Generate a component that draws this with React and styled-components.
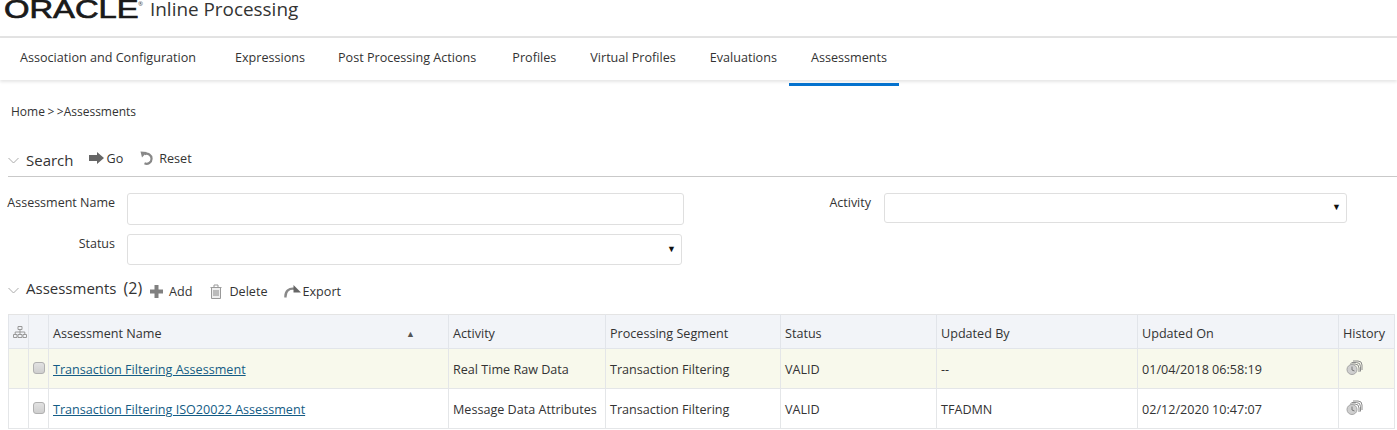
import React from "react";
import styled, { createGlobalStyle } from "styled-components";

const GlobalStyle = createGlobalStyle`
  html, body {
    margin: 0;
    padding: 0;
    background: #fff;
    font-family: "Open Sans", "Noto Sans", sans-serif;
    color: #333;
    overflow: hidden;
  }
`;

const Page = styled.div`
  width: 1397px;
  height: 430px;
  overflow: hidden;
`;

const Header = styled.header`
  height: 36px;
  display: flex;
  align-items: flex-start;
  border-bottom: 2px solid #e3e3e3;
`;

const Logo = styled.div`
  width: 146px;
  height: 18px;
  padding-left: 4px;
  display: flex;
  flex: none;
`;

const LogoText = styled.span`
  display: block;
  width: 134px;
  font-family: "Liberation Sans", sans-serif;
  font-weight: 400;
  font-size: 25px;
  line-height: 18px;
  color: #1a1a1a;
  -webkit-text-stroke: 0.7px #1a1a1a;
  transform: scaleX(1.31);
  transform-origin: left top;
`;

const Registered = styled.span`
  font-size: 6px;
  line-height: 8px;
  color: #444;
`;

const AppName = styled.div`
  font-size: 18.9px;
  line-height: 18px;
  color: #333;
`;

const Tabs = styled.nav`
  height: 42px;
  display: flex;
  box-shadow: 0 2px 3px rgba(0, 0, 0, 0.1);
`;

const Tab = styled.a`
  height: 48px;
  box-sizing: border-box;
  padding: 11px ${(p) => p.$right}px 0 ${(p) => p.$left}px;
  font-size: 12.6px;
  line-height: 18px;
  color: #333;
  border-bottom: 3px solid ${(p) => (p.$active ? "#0572ce" : "transparent")};
`;

const Crumbs = styled.div`
  margin-top: 24px;
  padding-left: 11px;
  font-size: 12px;
  line-height: 16px;
  color: #333;
`;

const Sep = styled.span`
  margin-left: 2.5px;
`;

const SectionHead = styled.div`
  display: flex;
  align-items: center;
  height: ${(p) => p.$height}px;
  margin: ${(p) => p.$margin};
  border-bottom: ${(p) => (p.$line ? "1px solid #c9c9c9" : "none")};
`;

const Chevron = styled.svg`
  width: 11px;
  height: 7px;
  margin-right: 7px;
  flex: none;
`;

const SectionTitle = styled.span`
  font-size: 15px;
  line-height: 20px;
  color: #333;
  margin-bottom: ${(p) => p.$lift || 0}px;
`;

const Count = styled.span`
  font-size: 16px;
  line-height: 20px;
  margin-left: 7px;
  margin-bottom: 4px;
  color: #333;
`;

const ToolButton = styled.span`
  display: inline-flex;
  align-items: center;
  gap: ${(p) => p.$gap || 4}px;
  margin-left: ${(p) => p.$left}px;
  margin-top: ${(p) => p.$drop || 0}px;
  margin-bottom: ${(p) => p.$lift || 0}px;
  font-size: 12.6px;
  color: #333;
`;

const FormRow = styled.div`
  display: flex;
  align-items: flex-start;
  margin-top: ${(p) => p.$top}px;
`;

const Label = styled.label`
  width: ${(p) => p.$width}px;
  flex: none;
  text-align: right;
  font-size: 12.5px;
  line-height: 18px;
  padding-top: 1px;
  color: #333;
`;

const Field = styled.div`
  width: ${(p) => p.$width}px;
  height: ${(p) => p.$height}px;
  margin-left: ${(p) => p.$left}px;
  box-sizing: border-box;
  flex: none;
  border: 1px solid #dfdfdf;
  border-radius: 3px;
  display: flex;
  align-items: center;
  justify-content: flex-end;
  padding: 0 5px 3px 0;
  font-size: 9px;
  color: #111;
  background: #fff;
`;

const Table = styled.table`
  margin: 13px 0 0 8px;
  width: 1386px;
  border-collapse: collapse;
  table-layout: fixed;
  font-size: 12.6px;
  color: #333;
`;

const Th = styled.th`
  height: 34px;
  padding: 4px 4px 0;
  font-weight: 400;
  text-align: left;
  background: #f2f4f8;
  border: 1px solid #e2e5ea;
  border-top-color: #e4e4e4;
  box-sizing: border-box;
  position: relative;
`;

const SortMark = styled.span`
  position: absolute;
  right: 33px;
  top: 12px;
  font-size: 9px;
  color: #555;
`;

const Row = styled.tr`
  background: ${(p) => (p.$hl ? "#f8f9ec" : "#fff")};
`;

const Td = styled.td`
  height: 40px;
  padding: 2px 4px 0;
  border: 1px solid #e4e6e8;
  box-sizing: border-box;
  white-space: nowrap;
  vertical-align: middle;
`;

const Check = styled.span`
  display: block;
  width: 12px;
  height: 12px;
  margin-top: -4px;
  border: 1px solid #b0b0b0;
  border-radius: 3px;
  background: linear-gradient(#e2e2e2, #cfcfcf);
  box-sizing: border-box;
`;

const NameLink = styled.a`
  color: #145c85;
  text-decoration: underline;
`;

const HistoryLink = styled.span`
  display: block;
  width: 17px;
  height: 15px;
  margin: -5px 0 0 3px;
`;

const TreeWrap = styled.span`
  display: block;
  height: 13px;
  margin-top: -3px;
`;

const GoIcon = () => (
  <svg width="15" height="12" viewBox="0 0 15 12">
    <path d="M0 3h8V0l7 6-7 6V9H0z" fill="#666" />
  </svg>
);

const ResetIcon = () => (
  <svg width="15" height="14" viewBox="0 0 15 14" fill="none">
    <path d="M4.500 3.200A5 5 0 1 1 4.500 12.300" stroke="#888" strokeWidth="2.200" />
    <path d="M.5 .5l6.500.5L2 6.500z" fill="#888" />
  </svg>
);

const PlusIcon = () => (
  <svg width="13" height="13" viewBox="0 0 13 13">
    <path d="M4.500 0h4v4.500H13v4H8.500V13h-4V8.500H0v-4h4.500z" fill="#808080" />
  </svg>
);

const TrashIcon = () => (
  <svg width="12" height="15" viewBox="0 0 12 15" fill="none" stroke="#999">
    <path d="M.5 3.500h11M4 3V1h4v2" />
    <path d="M1.500 3.500h9v11h-9z" fill="#eee" />
    <path d="M4 6v6M6 6v6M8 6v6" stroke="#888" />
  </svg>
);

const ExportIcon = () => (
  <svg width="17" height="14" viewBox="0 0 17 14" fill="none">
    <path d="M1.500 13.500C1 7 5 3.800 11 4.800" stroke="#888" strokeWidth="2.400" />
    <path d="M9.500 1l7.500 7.500h-7.500z" fill="#666" />
  </svg>
);

const TreeIcon = () => (
  <svg width="14" height="13" viewBox="0 0 14 13" fill="none" stroke="#999">
    <path d="M5 .5h4v3H5zM.5 8.500h3.500v3H.5zM10 8.500h3.500v3H10zM5 8.500h4v3H5zM7 3.500v5M2.200 8.500V6h9.600v2.500" />
  </svg>
);

const HistoryIcon = () => (
  <svg width="17" height="15" viewBox="0 0 17 15" fill="none">
    <path d="M7 1h5a4 4 0 0 1 4 4v5" stroke="#8c8c8c" />
    <path d="M5.500 2.500h5a4 4 0 0 1 4 4v5" stroke="#8c8c8c" />
    <path d="M4 4h5a4 4 0 0 1 4 4v4" stroke="#8c8c8c" />
    <circle cx="6" cy="9.500" r="5" fill="#cfcfcf" stroke="#a5a5a5" />
    <path d="M6 6.500v3.500l2.500 1" stroke="#777" />
  </svg>
);

const SectionChevron = () => (
  <Chevron viewBox="0 0 11 7" fill="none">
    <path d="M.5 1l5 5 5-5" stroke="#aaa" />
  </Chevron>
);

const tabs = [
  { label: "Association and Configuration", left: 20, right: 17 },
  { label: "Expressions", left: 22, right: 11 },
  { label: "Post Processing Actions", left: 22, right: 14 },
  { label: "Profiles", left: 22, right: 12 },
  { label: "Virtual Profiles", left: 22, right: 12 },
  { label: "Evaluations", left: 22, right: 12 },
  { label: "Assessments", left: 22, right: 12 },
];

const rows = [
  {
    name: "Transaction Filtering Assessment",
    activity: "Real Time Raw Data",
    by: "--",
    on: "01/04/2018 06:58:19",
    hl: true,
  },
  {
    name: "Transaction Filtering ISO20022 Assessment",
    activity: "Message Data Attributes",
    by: "TFADMN",
    on: "02/12/2020 10:47:07",
  },
];

const App = () => (
  <Page>
    <GlobalStyle />
    <Header>
      <Logo>
        <LogoText>ORACLE</LogoText>
        <Registered>®</Registered>
      </Logo>
      <AppName>Inline Processing</AppName>
    </Header>
    <Tabs>
      {tabs.map((t) => (
        <Tab key={t.label} $left={t.left} $right={t.right} $active={t.label === "Assessments"}>
          {t.label}
        </Tab>
      ))}
    </Tabs>
    <Crumbs>
      Home<Sep>&gt;</Sep>
      <Sep>&gt;</Sep>
      Assessments
    </Crumbs>

    <SectionHead $height={32} $margin="24px 0 0 8px" $line>
      <SectionChevron />
      <SectionTitle>Search</SectionTitle>
      <ToolButton $left={15} $lift={4} $gap={3}>
        <GoIcon />
        Go
      </ToolButton>
      <ToolButton $left={17} $lift={4} $gap={4}>
        <ResetIcon />
        Reset
      </ToolButton>
    </SectionHead>

    <FormRow $top={16}>
      <Label $width={115}>Assessment Name</Label>
      <Field $width={557} $height={32} $left={12} />
      <Label $width={187}>Activity</Label>
      <Field $width={463} $height={30} $left={13}>
        ▼
      </Field>
    </FormRow>
    <FormRow $top={9}>
      <Label $width={115}>Status</Label>
      <Field $width={555} $height={31} $left={12}>
        ▼
      </Field>
    </FormRow>

    <SectionHead $height={22} $margin="14px 0 0 8px">
      <SectionChevron />
      <SectionTitle $lift={4}>Assessments</SectionTitle>
      <Count>(2)</Count>
      <ToolButton $left={8} $gap={6} $drop={2}>
        <PlusIcon />
        Add
      </ToolButton>
      <ToolButton $left={18} $gap={7} $drop={2}>
        <TrashIcon />
        Delete
      </ToolButton>
      <ToolButton $left={16} $gap={2} $drop={2}>
        <ExportIcon />
        Export
      </ToolButton>
    </SectionHead>

    <Table>
      <colgroup>
        <col width="20" />
        <col width="20" />
        <col width="400" />
        <col width="157" />
        <col width="175" />
        <col width="156" />
        <col width="201" />
        <col width="201" />
        <col width="56" />
      </colgroup>
      <thead>
        <tr>
          <Th>
            <TreeWrap>
              <TreeIcon />
            </TreeWrap>
          </Th>
          <Th />
          <Th>
            Assessment Name<SortMark>▲</SortMark>
          </Th>
          <Th>Activity</Th>
          <Th>Processing Segment</Th>
          <Th>Status</Th>
          <Th>Updated By</Th>
          <Th>Updated On</Th>
          <Th>History</Th>
        </tr>
      </thead>
      <tbody>
        {rows.map((r) => (
          <Row key={r.name} $hl={r.hl}>
            <Td />
            <Td>
              <Check />
            </Td>
            <Td>
              <NameLink>{r.name}</NameLink>
            </Td>
            <Td>{r.activity}</Td>
            <Td>Transaction Filtering</Td>
            <Td>VALID</Td>
            <Td>{r.by}</Td>
            <Td>{r.on}</Td>
            <Td>
              <HistoryLink>
                <HistoryIcon />
              </HistoryLink>
            </Td>
          </Row>
        ))}
      </tbody>
    </Table>
  </Page>
);

export default App;
